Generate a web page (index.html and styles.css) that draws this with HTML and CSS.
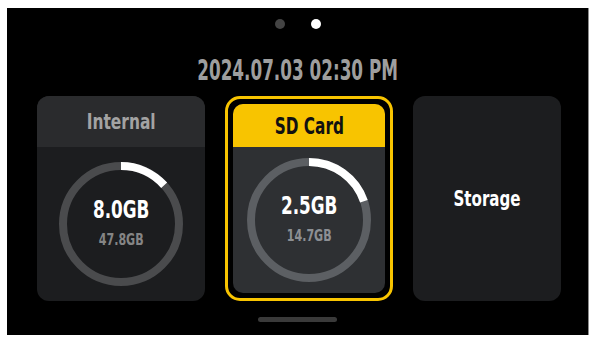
FILE: index.html
```html
<!DOCTYPE html>
<html lang="en">
<head>
    <meta charset="UTF-8">
    <meta name="viewport" content="width=device-width, initial-scale=1.0">
    <title>Storage</title>
    <link rel="stylesheet" href="styles.css">
</head>
<body>

    <div class="screen">
        <!-- page indicator -->
        <div class="pager">
            <span class="dot"></span>
            <span class="dot active"></span>
        </div>

        <div class="clock"><span class="condensed">2024.07.03 02:30 PM</span></div>

        <div class="cards">
            <div class="card">
                <div class="card-head"><span class="condensed">Internal</span></div>
                <div class="card-body">
                    <div class="gauge">
                        <svg width="124" height="124" viewBox="0 0 124 124">
                            <circle class="track" cx="62" cy="62" r="58"/>
                            <circle class="fill" cx="62" cy="62" r="58" stroke-dasharray="48.6 400" transform="rotate(-90 62 62)"/>
                        </svg>
                        <div class="gauge-text">
                            <div class="used">8.0GB</div>
                            <div class="total">47.8GB</div>
                        </div>
                    </div>
                </div>
            </div>

            <div class="card selected">
                <div class="card-inner">
                    <div class="card-head"><span class="condensed">SD Card</span></div>
                    <div class="card-body">
                        <div class="gauge">
                            <svg width="124" height="124" viewBox="0 0 124 124">
                                <circle class="track" cx="62" cy="62" r="58"/>
                                <circle class="fill" cx="62" cy="62" r="58" stroke-dasharray="71.9 400" transform="rotate(-90 62 62)"/>
                            </svg>
                            <div class="gauge-text">
                                <div class="used">2.5GB</div>
                                <div class="total">14.7GB</div>
                            </div>
                        </div>
                    </div>
                </div>
            </div>

            <div class="card plain"><span class="condensed">Storage</span></div>
        </div>

        <div class="home-bar"></div>
    </div>

</body>
</html>
```

FILE: styles.css
```css
body {
    margin: 0;
    background: #fff;
    font-family: "DejaVu Sans Condensed", "DejaVu Sans", sans-serif;
    font-weight: bold;
}
/* no DIN-like face installed, so squeeze the condensed one a bit more */
.condensed {
    display: inline-block;
    transform: scaleX(0.78);
}
.screen {
    margin: 8px 0 0 7px;
    width: 581px;
    height: 327px;
    background: #000;
    border-right: 1px solid #8c8c8c;
    display: flex;
    flex-direction: column;
}
.pager {
    margin-top: 11px;
    height: 10px;
    display: flex;
    justify-content: center;
    gap: 26px;
}
.dot {
    width: 10px;
    height: 10px;
    border-radius: 50%;
    background: #444;
}
.dot.active {
    background: #fff;
}
.clock {
    margin-top: 26px;
    height: 30px;
    line-height: 30px;
    font-size: 27.5px;
    color: #9e9e9e;
    text-align: center;
    white-space: nowrap;
}
.clock .condensed {
    transform: scaleX(0.68);
}
.cards {
    margin-top: 11px;
    padding-left: 30px;
    display: flex;
    gap: 20px;
    height: 205px;
}
.card {
    width: 168px;
    border-radius: 12px;
    background: #1c1d1f;
    display: flex;
    flex-direction: column;
    overflow: hidden;
}
.card-head {
    height: 51px;
    flex-shrink: 0;
    display: flex;
    align-items: center;
    justify-content: center;
    background: #2a2b2d;
    color: #a3a3a3;
    font-size: 22px;
    white-space: nowrap;
}
.card-body {
    flex: 1;
    display: flex;
    align-items: center;
    justify-content: center;
}
.gauge {
    display: grid;
    place-items: center;
}
.gauge svg,
.gauge-text {
    grid-area: 1 / 1;
}
.track {
    fill: none;
    stroke: #4a4b4d;
    stroke-width: 8;
}
.fill {
    fill: none;
    stroke: #fff;
    stroke-width: 8;
}
.gauge-text {
    padding-bottom: 2px;
    text-align: center;
    transform: scaleX(0.78);
}
.used {
    font-size: 24px;
    line-height: 26px;
    color: #fff;
}
.total {
    margin-top: 8px;
    font-size: 15.8px;
    line-height: 18px;
    color: #858585;
}

/* selected card */
.card.selected {
    box-sizing: border-box;
    border: 3px solid #f8c400;
    border-radius: 15px;
    padding: 5px;
    background: #000;
    overflow: visible;
}
.card-inner {
    flex: 1;
    border-radius: 10px;
    overflow: hidden;
    background: #2e3033;
    display: flex;
    flex-direction: column;
}
.selected .card-head {
    height: 43px;
    background: #f8c400;
    color: #111;
    font-size: 23.3px;
}
.selected .card-head .condensed {
    transform: scaleX(0.73);
}
.selected .track {
    stroke: #5c5f63;
}
.selected .total {
    color: #8c8f93;
}

.card.plain {
    width: 148px;
    align-items: center;
    justify-content: center;
    color: #fff;
    font-size: 21.5px;
}
.home-bar {
    margin: 16px auto 0;
    width: 79px;
    height: 5px;
    border-radius: 3px;
    background: #3a3a3a;
}
```
